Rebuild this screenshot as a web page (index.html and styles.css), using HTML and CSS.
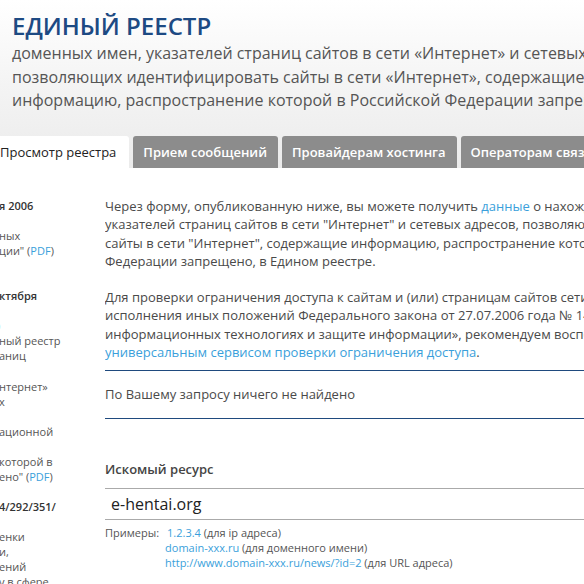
FILE: index.html
```html
<!DOCTYPE html>
<html lang="ru">
<head>
<meta charset="utf-8">
<title>Единый реестр</title>
<link rel="stylesheet" href="styles.css">
</head>
<body>
<div class="page">
  <header class="header">
    <h1 class="title">ЕДИНЫЙ РЕЕСТР</h1>
    <p class="subtitle">доменных имен, указателей страниц сайтов в сети «Интернет» и сетевых адресов,<br>позволяющих идентифицировать сайты в сети «Интернет», содержащие<br>информацию, распространение которой в Российской Федерации запрещено</p>
    <nav class="tabs">
      <span class="tab tab-active">Просмотр реестра</span>
      <span class="tab">Прием сообщений</span>
      <span class="tab">Провайдерам хостинга</span>
      <span class="tab">Операторам связи</span>
    </nav>
  </header>
  <div class="body">
    <aside class="sidebar">
      <div class="ln b">я 2006</div>
      <div class="ln">&nbsp;</div>
      <div class="ln">ных</div>
      <div class="ln">ции" (<a class="lnk">PDF</a>)</div>
      <div class="ln">&nbsp;</div>
      <div class="ln">&nbsp;</div>
      <div class="ln b">ктября</div>
      <div class="ln">&nbsp;</div>
      <div class="ln sliver"><a class="lnk">)</a></div>
      <div class="ln">ный реестр</div>
      <div class="ln">аниц</div>
      <div class="ln">&nbsp;</div>
      <div class="ln">нтернет»</div>
      <div class="ln">х</div>
      <div class="ln">&nbsp;</div>
      <div class="ln">ационной</div>
      <div class="ln">&nbsp;</div>
      <div class="ln">которой в</div>
      <div class="ln">ено" (<a class="lnk">PDF</a>)</div>
      <div class="ln">&nbsp;</div>
      <div class="ln b">4/292/351/</div>
      <div class="ln">&nbsp;</div>
      <div class="ln">енки</div>
      <div class="ln">и,</div>
      <div class="ln">ений</div>
      <div class="ln">у в сфере</div>
    </aside>
    <main class="main">
      <p class="para">Через форму, опубликованную ниже, вы можете получить <a class="lnk">данные</a> о нахождении доменных имен,<br>указателей страниц сайтов в сети "Интернет" и сетевых адресов, позволяющих идентифицировать<br>сайты в сети "Интернет", содержащие информацию, распространение которой в Российской<br>Федерации запрещено, в Едином реестре.</p>
      <p class="para para-last">Для проверки ограничения доступа к сайтам и (или) страницам сайтов сети «Интернет» в целях<br>исполнения иных положений Федерального закона от 27.07.2006 года № 149-ФЗ «Об информации,<br>информационных технологиях и защите информации», рекомендуем воспользоваться<br><a class="lnk">универсальным сервисом проверки ограничения доступа</a>.</p>
      <div class="result">По Вашему запросу ничего не найдено</div>
      <form class="form">
        <label class="label">Искомый ресурс</label>
        <div class="input">e-hentai.org</div>
        <div class="examples">
          <span class="ex-label">Примеры:</span>
          <div class="ex-list">
            <div class="ex-first"><a class="lnk">1.2.3.4</a> (для ip адреса)</div>
            <div><a class="lnk">domain-xxx.ru</a> (для доменного имени)</div>
            <div><a class="lnk">http://www.domain-xxx.ru/news/?id=2</a> (для URL адреса)</div>
          </div>
        </div>
      </form>
    </main>
  </div>
</div>
</body>
</html>
```
FILE: styles.css
```css
html, body {
  margin: 0;
  padding: 0;
  background: #fff;
}
body {
  width: 584px;
  height: 584px;
  overflow: hidden;
  font-family: "Open Sans", "DejaVu Sans", sans-serif;
  color: #444;
}
.page {
  width: 584px;
}
.header {
  background: linear-gradient(#ffffff 0%, #f4f4f4 50%, #ebebeb 100%);
  padding: 9px 0 0 12px;
  overflow: hidden;
}
.title {
  margin: 0;
  font-size: 24px;
  font-weight: 600;
  line-height: 33px;
  color: #1d4a83;
  white-space: nowrap;
}
.subtitle {
  margin: 0;
  font-size: 16px;
  line-height: 23.5px;
  color: #555;
  white-space: nowrap;
}
.tabs {
  display: flex;
  gap: 4px;
  margin: 23px 0 0 -25px;
  height: 32px;
  white-space: nowrap;
}
.tab {
  display: flex;
  align-items: center;
  padding: 0 11px 0 10px;
  background: #8c8c8c;
  color: #fff;
  font-size: 13px;
  font-weight: 600;
  border-radius: 3px 3px 0 0;
}
.tab-active {
  background: #fff;
  color: #222;
  font-weight: 400;
  padding: 0 13px 0 13px;
}
.body {
  display: flex;
}
.sidebar {
  width: 105px;
  flex: none;
  padding-top: 30.5px;
  font-size: 11px;
  line-height: 15.04px;
  color: #555;
  white-space: nowrap;
  overflow: hidden;
}
.ln {
  text-indent: -1px;
}
.ln.b {
  color: #333;
  font-weight: 600;
}
.ln.sliver {
  text-indent: -3px;
}
.lnk {
  color: #3a9fdb;
  text-decoration: none;
}
.main {
  flex: 1;
  min-width: 0;
  padding-top: 29.5px;
  overflow: hidden;
}
.para {
  margin: 0 0 18px;
  font-size: 13px;
  line-height: 18.3px;
  color: #4a4a4a;
  white-space: nowrap;
}
.para-last {
  margin-bottom: 8.5px;
}
.result {
  border-top: 1px solid #1f4a7e;
  border-bottom: 1px solid #1f4a7e;
  padding: 14px 0 15.5px 1px;
  margin-left: -1px;
  font-size: 13px;
  line-height: 18px;
  color: #4a4a4a;
}
.form {
  padding-top: 40.5px;
}
.label {
  display: block;
  font-size: 13px;
  font-weight: 600;
  color: #444;
  line-height: 18px;
}
.input {
  margin: 10px 0 0 -1px;
  height: 30px;
  border: 1px solid #aaa;
  border-right: 0;
  padding-left: 6px;
  font-size: 16px;
  line-height: 30px;
  color: #222;
}
.examples {
  display: flex;
  gap: 6px;
  margin-top: 5px;
  font-size: 11px;
  line-height: 15px;
  color: #555;
  white-space: nowrap;
}
.ex-first {
  padding-left: 2px;
}
```
